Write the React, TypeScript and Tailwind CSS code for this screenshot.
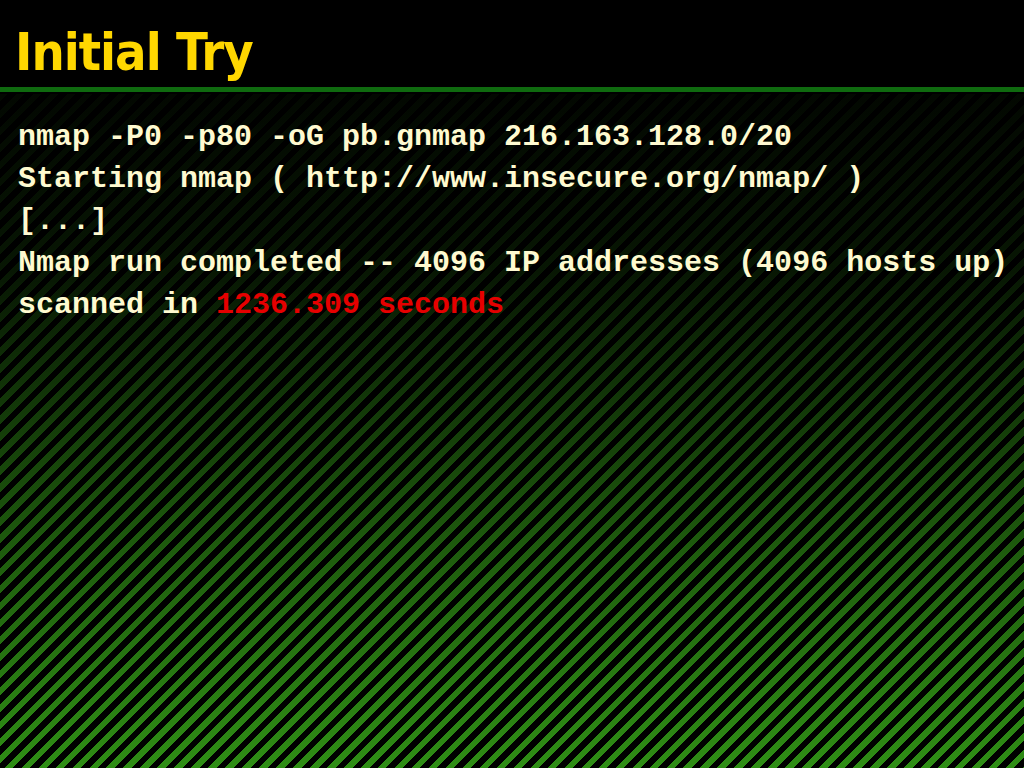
export default function App() {
    const mono = "font-['Liberation_Mono','DejaVu_Sans_Mono',monospace]";

    return (
        <div className="w-[1024px] h-[768px] overflow-hidden flex flex-col bg-[linear-gradient(to_bottom,#000_0%,rgba(0,0,0,0.85)_35%,rgba(0,0,0,0.35)_75%,rgba(0,0,0,0.05)_100%),repeating-linear-gradient(135deg,#000_0px,#000_6px,#319516_6px,#319516_12px)]">
            {/* Title bar */}
            <div className="bg-black h-[87px] flex items-end pl-[15px] pb-[9px]">
                <h1 className="font-['DejaVu_Sans_Condensed','DejaVu_Sans',sans-serif] font-bold text-[52px] tracking-[-1px] leading-none text-[#ffd700]">
                    Initial Try
                </h1>
            </div>
            <div className="h-[5px] bg-[#0f6a0f]" />
            <div className="h-[2px] bg-black" />

            {/* Terminal output */}
            <div className={`${mono} font-bold text-[30px] leading-[42px] text-[#fffad0] pl-[18px] pt-[22px] whitespace-pre`}>
                <div>nmap -P0 -p80 -oG pb.gnmap 216.163.128.0/20</div>
                <div>Starting nmap ( http://www.insecure.org/nmap/ )</div>
                <div>[...]</div>
                <div>Nmap run completed -- 4096 IP addresses (4096 hosts up)</div>
                <div>
                    scanned in <span className="text-[#e60000]">1236.309 seconds</span>
                </div>
            </div>
        </div>
    );
}
